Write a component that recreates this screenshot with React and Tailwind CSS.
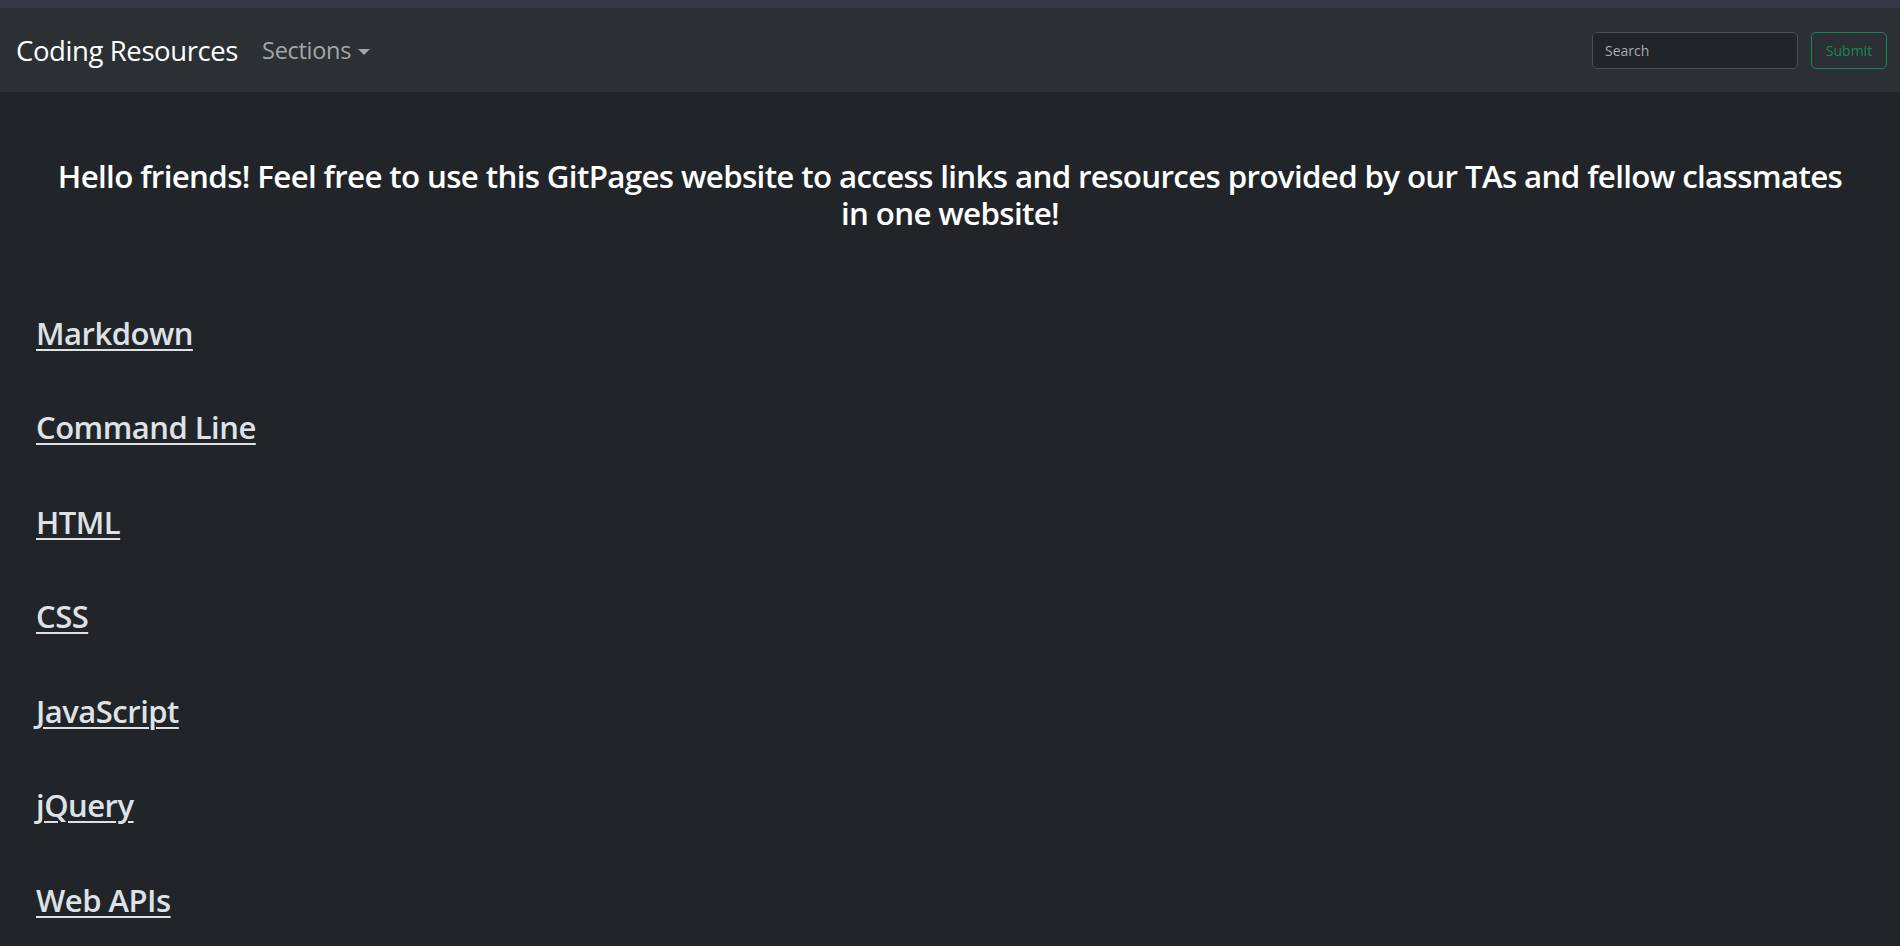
import React from "react";

const links = ["Markdown", "Command Line", "HTML", "CSS", "JavaScript", "jQuery", "Web APIs"];

const App = () => {
  return (
    <div className="min-h-screen bg-[#212529] text-[#dee2e6]" style={{ fontFamily: '"Open Sans", "Noto Sans", sans-serif' }}>
      {/* top strip */}
      <div className="h-2 bg-[#343849]" />

      {/* navbar */}
      <nav className="h-[84px] bg-[#2b3035] flex items-center justify-between pl-4 pr-[13px]">
        <div className="flex items-center gap-6 pt-[2px]">
          <a href="#" className="text-[27.5px] text-white leading-none tracking-[-0.4px]">Coding Resources</a>
          <button className="flex items-center gap-[7px] text-[23.5px] text-[#a3a6a9] leading-none tracking-[-0.3px]">
            Sections
            <span className="w-0 h-0 border-l-[6px] border-r-[6px] border-t-[6px] border-l-transparent border-r-transparent border-t-[#a3a6a9] mt-[2px]" />
          </button>
        </div>
        <form className="flex items-center gap-[13px]" onSubmit={(e) => e.preventDefault()}>
          <input
            type="search"
            placeholder="Search"
            className="w-[206px] h-[37px] rounded-[5px] border border-[#495057] bg-[#212529] px-[12px] text-[14px] text-[#dee2e6] placeholder:text-[#a8abae] outline-none"
          />
          <button className="w-[76px] h-[37px] rounded-[5px] border border-[#198754] text-[#198754] text-[14px]">Submit</button>
        </form>
      </nav>

      {/* intro */}
      <main className="px-9">
        <h4 className="pt-[66px] px-[12px] text-center text-[31.3px] font-semibold leading-[37px] text-white tracking-[-0.65px]">
          Hello friends! Feel free to use this GitPages website to access links and resources provided by our TAs and fellow classmates in one website!
        </h4>

        <ul className="mt-[81px] flex flex-col gap-[54.5px]">
          {links.map((name) => (
            <li key={name} className="h-[40px] flex items-center">
              <a href="#" className="text-[31px] font-semibold leading-none underline decoration-2 underline-offset-[4px] text-[#dee2e6] tracking-[-0.5px]">
                {name}
              </a>
            </li>
          ))}
        </ul>
      </main>
    </div>
  );
};

export default App;
